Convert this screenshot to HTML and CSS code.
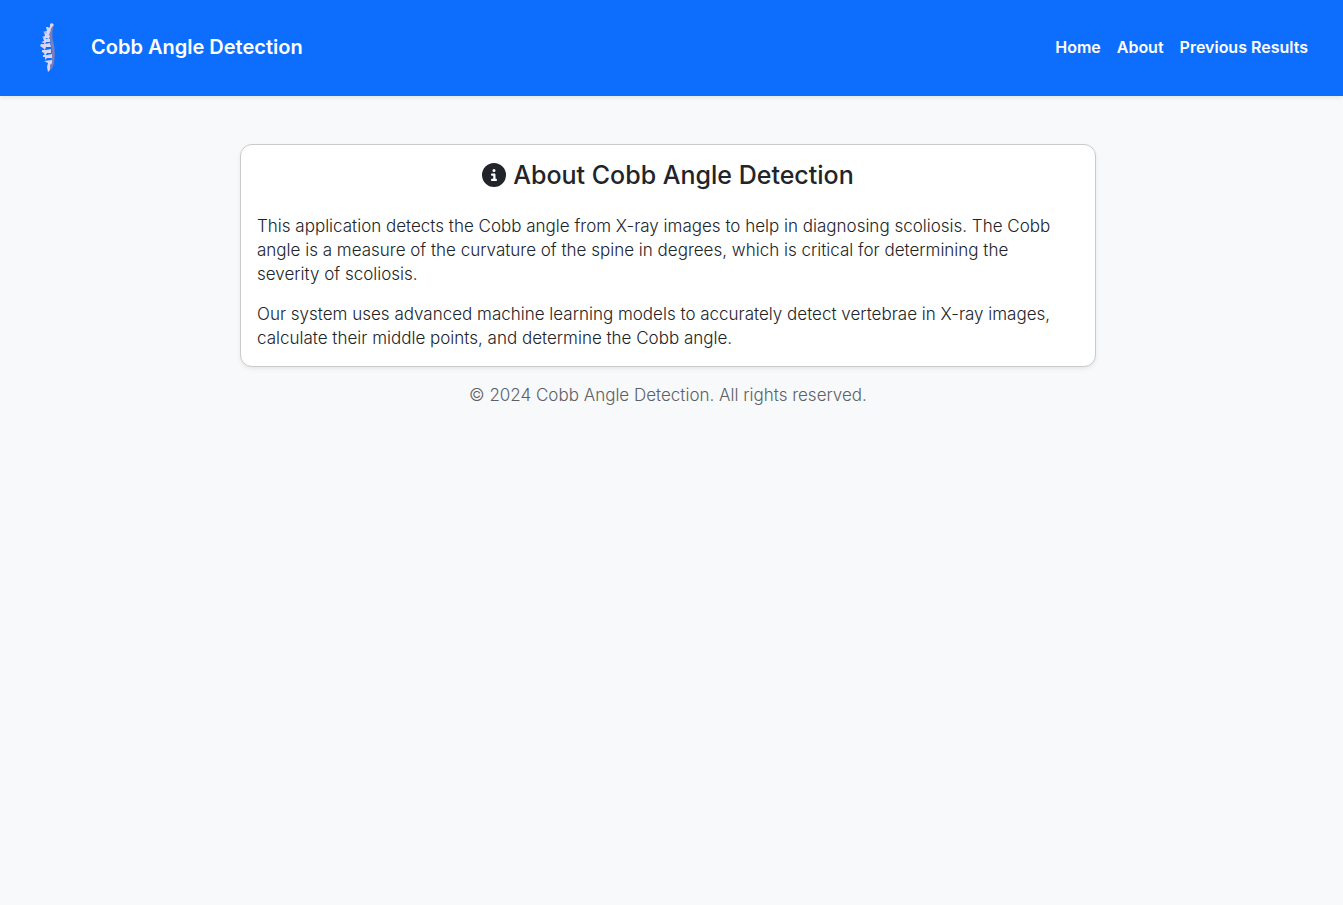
FILE: index.html
```html
<!DOCTYPE html>
<html lang="en">
<head>
<meta charset="utf-8">
<meta name="viewport" content="width=device-width, initial-scale=1">
<title>About - Cobb Angle Detection</title>
<link rel="stylesheet" href="styles.css">
</head>
<body>
<header class="navbar">
  <a class="brand" href="#">
    <svg class="brand-logo" viewBox="0 0 60 75" aria-hidden="true">
      <path class="spine-shadow" d="M27 16 Q25 22 26 29 Q29 38 28 49 Q28 54 25 59"/>
      <g class="spine-bones">
        <path d="M25 14 L27 13 L29 15 L27 17 L25 20 L22 19 L25 17 Z"/>
        <path d="M21 17 L23 17 L26 20 L25 22 L24 25 L22 25 L22 23 L18 22 L22 21 Z"/>
        <path d="M19 22 L23 24 L25 26 L24 29 L21 28 L20 31 L19 28 L17 27 L20 26 Z"/>
        <path d="M18 28 L21 29 L25 29 L25 32 L21 32 L20 35 L19 33 L16 32 L19 31 Z"/>
        <path d="M16 34 L20 34 L25 33 L26 37 L21 37 L20 40 L18 38 L15 36 Z"/>
        <path d="M17 40 L21 40 L26 39 L26 43 L22 43 L20 46 L19 43 L17 42 Z"/>
        <path d="M18 45 L22 45 L27 44 L27 48 L22 48 L20 50 L20 47 L18 47 Z"/>
        <path d="M19 51 L27 50 L27 53 L25 55 L25 60 L23 62 L22 57 L23 53 Z"/>
      </g>
    </svg>
    <span class="brand-name">Cobb Angle Detection</span>
  </a>
  <nav class="nav-links" aria-label="Main">
    <a href="#">Home</a>
    <a href="#">About</a>
    <a href="#">Previous Results</a>
  </nav>
</header>
<div class="page">
  <main class="card">
    <h1 class="card-title">
      <svg class="info-icon" viewBox="0 0 512 512" aria-hidden="true"><path fill="currentColor" d="M256 512A256 256 0 1 0 256 0a256 256 0 1 0 0 512zM216 336h24V272H216c-13 0-24-11-24-24s11-24 24-24h48c13 0 24 11 24 24v88h8c13 0 24 11 24 24s-11 24-24 24H216c-13 0-24-11-24-24s11-24 24-24zm40-208a32 32 0 1 1 0 64 32 32 0 1 1 0-64z"/></svg>
      <span>About Cobb Angle Detection</span>
    </h1>
    <p>This application detects the Cobb angle from X-ray images to help in diagnosing scoliosis. The Cobb angle is a measure of the curvature of the spine in degrees, which is critical for determining the severity of scoliosis.</p>
    <p>Our system uses advanced machine learning models to accurately detect vertebrae in X-ray images, calculate their middle points, and determine the Cobb angle.</p>
  </main>
  <footer class="footer">© 2024 Cobb Angle Detection. All rights reserved.</footer>
</div>
</body>
</html>
```
FILE: styles.css
```css
* { box-sizing: border-box; }

body {
  margin: 0;
  background: #f8f9fa;
  color: #212529;
  font: 300 17px/24px Inter, "Open Sans", sans-serif;
}

.navbar {
  display: flex;
  align-items: center;
  justify-content: space-between;
  min-height: 96px;
  padding: 9px 35px 11px 25px;
  background: #0d6efd;
  box-shadow: 0 2px 4px rgba(0, 0, 0, 0.075);
}

.navbar a { color: #fff; text-decoration: none; }

.brand { display: flex; align-items: center; gap: 6px; }

.brand-logo { width: 60px; height: 75px; }

.spine-shadow { fill: none; stroke: #7d7db8; stroke-width: 3; }

.spine-bones { fill: #d9d6f4; }

.brand-name { font-size: 20px; line-height: 30px; font-weight: 600; }

.nav-links { display: flex; flex-wrap: wrap; gap: 16px; font-size: 16px; font-weight: 600; }

.page { padding: 48px 7px 0 0; }

.card {
  max-width: 856px;
  margin: 0 auto;
  padding: 16px;
  background: #fff;
  border: 1px solid #c8cacc;
  border-radius: 12px;
  box-shadow: 0 2px 4px rgba(0, 0, 0, 0.075);
}

.card-title {
  display: flex;
  align-items: center;
  justify-content: center;
  gap: 7px;
  margin: 0 0 25px;
  font-size: 25px;
  line-height: 28px;
  font-weight: 500;
}

.info-icon { width: 24px; height: 24px; }

.card p { margin: 0 0 16px; padding-right: 8px; }

.card p:last-child { margin-bottom: 0; }

.footer { padding: 16px; text-align: center; color: #5b6166; }
```
